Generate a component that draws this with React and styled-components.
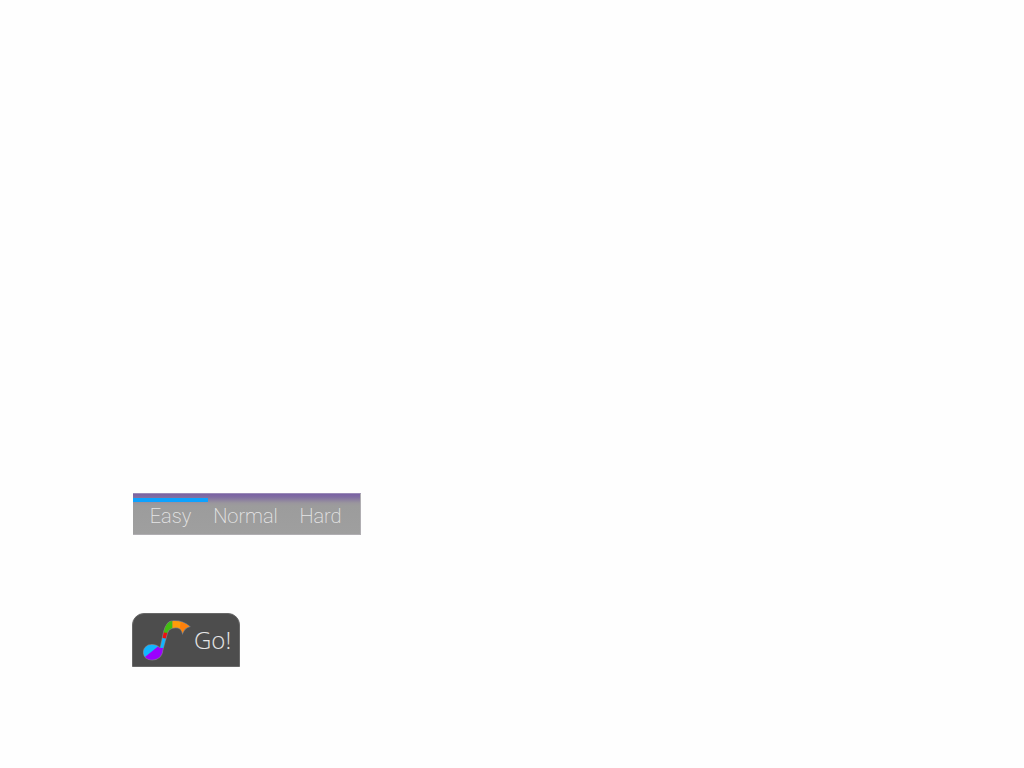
import React, { useState } from "react";
import styled, { createGlobalStyle } from "styled-components";

const GlobalStyle = createGlobalStyle`
  *, *::before, *::after { box-sizing: border-box; }
  body { margin: 0; background: #fefefe; }
`;

const Page = styled.main`
  display: flex;
  flex-direction: column;
  align-items: flex-start;
  gap: 78px;
  padding: 493px 132px 100px;
`;

const LevelBar = styled.div`
  display: grid;
  grid-template-columns: repeat(3, 75px);
  height: 42px;
  margin-left: 1px;
  padding-right: 2px;
  border: solid #b0aeb2;
  border-width: 1px 1px 1px 0;
  border-top-color: #9a8ab8;
  background: linear-gradient(#7a62a4 0, #806da2 3px, #9a969d 9px, #9c9c9c 12px, #9f9f9f 100%);
`;

const LevelButton = styled.button`
  position: relative;
  height: 40px;
  padding: 4px 0 0;
  border: 0;
  background: transparent;
  color: #e6e6e6;
  font: 200 20px/24px Roboto, sans-serif;
  cursor: pointer;

  &::before {
    content: "";
    position: absolute;
    inset: 4px 0 auto;
    height: 4px;
    background: ${({ $active }) => ($active ? "#0ca2ff" : "transparent")};
  }
`;

const GoButton = styled.button`
  display: flex;
  align-items: center;
  gap: 3px;
  height: 54px;
  padding: 0 8px 0 10px;
  border: 1px solid #686868;
  border-radius: 12px 12px 0 0;
  background: #4d4d4d;
  color: #e6e6e6;
  font: 300 24px/32px "Open Sans", sans-serif;
  cursor: pointer;
`;

const NoteIcon = styled.svg`
  display: block;
  width: 48px;
  height: 42px;
`;

const NOTE_OUTLINE =
  "M17.2 29.5 L19.6 18.7 L20.7 13.5 C22 8 24 2 30 2 C36 1.6 42 3.5 46.4 7.6 C43 8.4 41.5 9.5 39.6 14 C39 12 38.5 10.8 37.3 9.8 C34.5 8.2 31.5 8.4 29 9.2 C26.3 10 25 11.5 24.2 14 L22.8 19.3 L19.6 31 C19.4 37 14.5 40.8 9.3 40.8 C4 40.8 0.6 37.6 0.6 33.4 C0.6 29.2 4 25.8 8.8 25.8 C12.4 25.8 15.2 27.2 17.2 29.5 Z";

function Note() {
  return (
    <NoteIcon viewBox="0 0 48 42" aria-hidden="true">
      <defs>
        <clipPath id="note-shape">
          <path d={NOTE_OUTLINE} />
        </clipPath>
      </defs>
      <path d={NOTE_OUTLINE} fill="#85858c" stroke="#85858c" strokeOpacity="0.8" strokeWidth="1.4" />
      <g clipPath="url(#note-shape)">
        <path d="M0 20 H15 V28 L2 38 L0 39Z" fill="#12b5ff" />
        <path d="M2 38 L15 27.5 L22 29 V42 H0Z" fill="#9b00ff" />
        <path d="M17 18 H26 L22 29 L17 29Z" fill="#12b5ff" />
        <path d="M18 12 L27 14 L25 20 L17 18.5Z" fill="#ed1010" />
        <path d="M18 0 H29.5 V10 L24.5 14 L18 13Z" fill="#43bd12" />
        <path d="M29.5 0 H48 V15 H29.5Z" fill="#ff9c0a" />
        <path d="M38 0 H48 V15 H36 L37 8Z" fill="#ff800c" />
      </g>
    </NoteIcon>
  );
}

const levels = ["Easy", "Normal", "Hard"];

export default function App() {
  const [level, setLevel] = useState("Easy");
  return (
    <>
      <GlobalStyle />
      <Page>
        <LevelBar role="group" aria-label="Difficulty">
          {levels.map((name) => (
            <LevelButton
              key={name}
              type="button"
              $active={level === name}
              aria-pressed={level === name}
              onClick={() => setLevel(name)}
            >
              {name}
            </LevelButton>
          ))}
        </LevelBar>
        <GoButton type="button">
          <Note />
          Go!
        </GoButton>
      </Page>
    </>
  );
}
